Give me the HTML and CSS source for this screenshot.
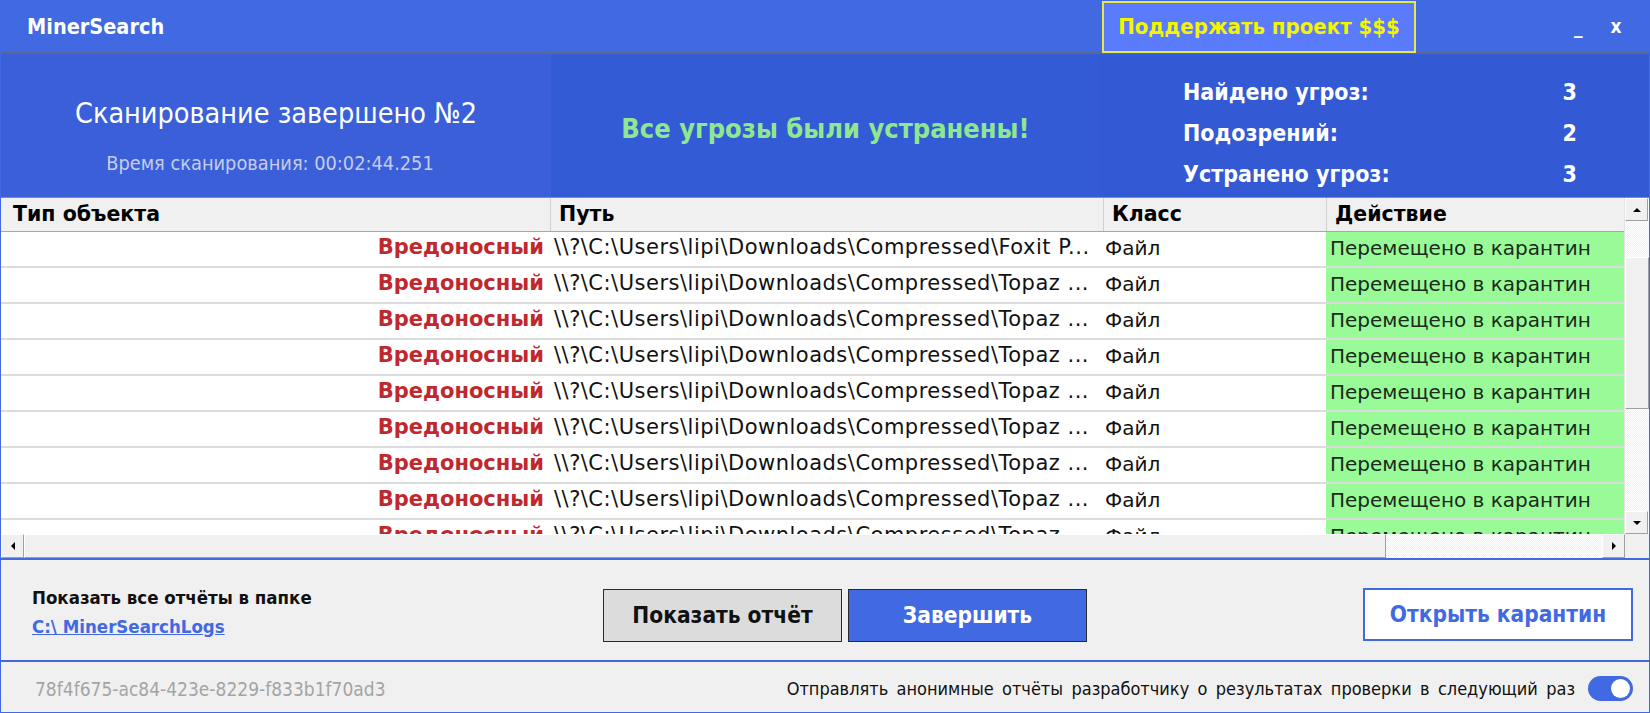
FILE: index.html
```html
<!DOCTYPE html>
<html lang="ru">
<head>
    <meta charset="UTF-8">
    <title>MinerSearch</title>
    <link rel="stylesheet" href="styles.css">
</head>
<body>
    <div class="window">
        <div class="titlebar">
            <div class="app-name">MinerSearch</div>
            <button class="donate-btn">Поддержать проект $$$</button>
            <div class="win-ctrls">
                <span class="win-btn">_</span>
                <span class="win-btn">x</span>
            </div>
        </div>

        <div class="summary">
            <div class="sum-left">
                <div class="scan-title">Сканирование завершено №2</div>
                <div class="scan-time">Время сканирования: 00:02:44.251</div>
            </div>
            <div class="sum-mid">
                <div class="scan-result">Все угрозы были устранены!</div>
            </div>
            <div class="sum-right">
                <div class="stat"><span>Найдено угроз:</span><span>3</span></div>
                <div class="stat"><span>Подозрений:</span><span>2</span></div>
                <div class="stat"><span>Устранено угроз:</span><span>3</span></div>
            </div>
        </div>

        <div class="grid-wrap">
            <div class="grid">
                <div class="grid-head">
                    <div class="hcell">Тип объекта</div>
                    <div class="hcell">Путь</div>
                    <div class="hcell">Класс</div>
                    <div class="hcell">Действие</div>
                </div>
                <div id="rows"></div>
            </div>
            <div class="vscroll">
                <div class="sb-btn"><span class="arr up"></span></div>
                <div class="vtrack">
                    <div class="vthumb"></div>
                </div>
                <div class="sb-btn"><span class="arr down"></span></div>
            </div>
        </div>
        <div class="hscroll">
            <div class="sb-btn"><span class="arr left"></span></div>
            <div class="htrack">
                <div class="hthumb"></div>
            </div>
            <div class="sb-btn"><span class="arr right"></span></div>
            <div class="corner"></div>
        </div>

        <div class="actions">
            <div class="logs">
                <div class="logs-label">Показать все отчёты в папке</div>
                <a class="logs-link" href="#">C:\ MinerSearchLogs</a>
            </div>
            <div class="main-btns">
                <button class="btn btn-grey">Показать отчёт</button>
                <button class="btn btn-blue">Завершить</button>
            </div>
            <button class="btn btn-outline">Открыть карантин</button>
        </div>

        <div class="footer">
            <div class="session-id">78f4f675-ac84-423e-8229-f833b1f70ad3</div>
            <label class="send-opt">
                Отправлять анонимные отчёты разработчику о результатах проверки в следующий раз
                <span class="toggle"><span class="knob"></span></span>
            </label>
        </div>
    </div>

    <script>
        // результаты проверки
        const items = [
            'Foxit P...', 'Topaz ...', 'Topaz ...', 'Topaz ...',
            'Topaz ...', 'Topaz ...', 'Topaz ...', 'Topaz ...', 'Topaz ...'
        ];

        const rows = document.getElementById('rows');
        items.forEach(name => {
            const row = document.createElement('div');
            row.className = 'grid-row';
            row.innerHTML =
                '<div class="cell type">Вредоносный</div>' +
                '<div class="cell path">\\\\?\\C:\\Users\\lipi\\Downloads\\Compressed\\' + name + '</div>' +
                '<div class="cell">Файл</div>' +
                '<div class="cell action">Перемещено в карантин</div>';
            rows.appendChild(row);
        });
    </script>
</body>
</html>
```

FILE: styles.css
```css
body {
    margin: 0;
    background: #f0f0f0;
    font-family: 'DejaVu Sans Condensed', 'DejaVu Sans', sans-serif;
    font-stretch: condensed;
}

.window {
    width: 1650px;
    height: 713px;
    box-sizing: border-box;
    border-left: 1px solid #4169e1;
    border-right: 1px solid #4169e1;
    border-bottom: 1px solid #4169e1;
    display: flex;
    flex-direction: column;
    overflow: hidden;
}

/* ---- заголовок окна ---- */
.titlebar {
    height: 52px;
    background: #4169e1;
    border-bottom: 2px solid #5d6892;
    display: flex;
    align-items: center;
    flex-shrink: 0;
}

.app-name {
    color: #fff;
    font-weight: bold;
    font-size: 21.5px;
    padding-left: 26px;
    flex: 1;
}

.donate-btn {
    height: 52px;
    width: 314px;
    margin-top: 1px;
    background: #5b7bfd;
    border: 2px solid #e8e84a;
    color: #f5f500;
    font-family: inherit;
    font-stretch: condensed;
    font-size: 22px;
    font-weight: bold;
    cursor: pointer;
}

.win-ctrls {
    width: 233px;
    box-sizing: border-box;
    display: flex;
    gap: 28px;
    padding-left: 158px;
    color: #fff;
    font-weight: bold;
    font-size: 19px;
}

/* ---- итог проверки ---- */
.summary {
    height: 143px;
    display: flex;
    background: #345bd6;
    border-bottom: 1px solid #8a8a9a;
    flex-shrink: 0;
    color: #fff;
}

.sum-left {
    width: 550px;
    background: #3a5fd9;
    display: flex;
    flex-direction: column;
    align-items: center;
    justify-content: center;
    gap: 22px;
    padding-top: 20px;
}

.scan-title {
    font-size: 28.5px;
}

.scan-time {
    font-size: 19.8px;
    color: #c5cde8;
    margin-right: 12px;
}

.sum-mid {
    width: 549px;
    display: flex;
    align-items: center;
    justify-content: center;
    padding-top: 6px;
}

.scan-result {
    color: #8fe88f;
    font-size: 27px;
    font-weight: bold;
}

.sum-right {
    flex: 1;
    background: #3359d4;
    padding: 25px 72px 0 83px;
    display: flex;
    flex-direction: column;
    gap: 15px;
}

.stat {
    display: flex;
    justify-content: space-between;
    font-size: 23px;
    font-weight: bold;
}

/* ---- таблица ---- */
.grid-wrap {
    height: 336px;
    display: flex;
    background: #fff;
    flex-shrink: 0;
    font-family: 'DejaVu Sans', sans-serif;
    font-stretch: normal;
}

.grid {
    flex: 1;
    overflow: hidden;
}

.grid-head,
.grid-row {
    display: grid;
    grid-template-columns: 549px 553px 223px 300px;
}

.grid-head {
    height: 33px;
    background: #f0f0f0;
    border-bottom: 1px solid #a8a8a8;
}

.hcell {
    font-weight: bold;
    font-size: 20.5px;
    padding: 4px 0 0 8px;
    border-left: 1px solid #d0d0d0;
}

.hcell:first-child {
    border-left: none;
    padding-left: 12px;
}

.grid-row {
    height: 34px;
    border-bottom: 2px solid #dcdcdc;
    font-size: 20px;
}

.cell {
    padding: 4px 0 0 2px;
    white-space: nowrap;
    overflow: hidden;
    color: #111;
}

.cell.type {
    text-align: right;
    padding-right: 6px;
    font-size: 21px;
    padding-top: 3px;
    color: #c0282d;
    font-weight: bold;
}

.cell.path {
    padding-left: 4px;
    padding-top: 3px;
    font-size: 21px;
    letter-spacing: 0.5px;
}

.cell.action {
    padding-left: 4px;
    background: #98fb98;
    color: #1c2a1c;
}

/* ---- полосы прокрутки ---- */
.vscroll {
    width: 24px;
    display: flex;
    flex-direction: column;
    border-left: 1px solid #e4e4e4;
}

.sb-btn {
    width: 23px;
    height: 23px;
    background: #f0f0f0;
    border: 1px solid #fff;
    border-right-color: #a0a0a0;
    border-bottom-color: #a0a0a0;
    box-sizing: border-box;
    display: flex;
    align-items: center;
    justify-content: center;
    flex-shrink: 0;
}

.vtrack,
.htrack {
    flex: 1;
    background: repeating-conic-gradient(#f0f0f0 0 25%, #fff 0 50%) 0 0 / 2px 2px;
}

.vthumb {
    height: 150px;
    margin-top: 36px;
    background: #f0f0f0;
    border: 1px solid #fff;
    border-right-color: #a0a0a0;
    border-bottom-color: #a0a0a0;
}

.hscroll {
    height: 24px;
    display: flex;
    background: #f0f0f0;
    flex-shrink: 0;
}

.hthumb {
    width: 1362px;
    height: 100%;
    box-sizing: border-box;
    background: #f0f0f0;
    border: 1px solid #fff;
    border-right-color: #a0a0a0;
    border-bottom-color: #a0a0a0;
}

.hscroll .sb-btn {
    height: 24px;
}

.corner {
    width: 24px;
    background: #f0f0f0;
}

.arr {
    width: 0;
    height: 0;
    border: 4px solid transparent;
}

.arr.up    { border-bottom-color: #000; margin-top: -4px; }
.arr.down  { border-top-color: #000; margin-bottom: -4px; }
.arr.left  { border-right-color: #000; margin-left: -4px; }
.arr.right { border-left-color: #000; margin-right: -4px; }

/* ---- кнопки ---- */
.actions {
    height: 100px;
    border-top: 2px solid #4169e1;
    border-bottom: 2px solid #4169e1;
    display: flex;
    align-items: center;
    flex-shrink: 0;
}

.logs {
    width: 571px;
    padding-left: 31px;
    display: flex;
    flex-direction: column;
    gap: 8px;
    margin-top: 4px;
}

.logs-label {
    font-weight: bold;
    font-size: 18.5px;
    color: #111;
}

.logs-link {
    font-weight: bold;
    font-size: 18.5px;
    color: #4169e1;
}

.main-btns {
    display: flex;
    gap: 6px;
    margin-top: 10px;
}

.btn {
    height: 53px;
    width: 239px;
    font-family: inherit;
    font-stretch: condensed;
    font-size: 22.5px;
    font-weight: bold;
    cursor: pointer;
}

.btn-grey {
    background: #dcdcdc;
    border: 1px solid #2a2a2a;
    color: #111;
}

.btn-blue {
    background: #4169e1;
    border: 1px solid #2a2a2a;
    color: #fff;
}

.btn-outline {
    margin-left: auto;
    margin-right: 16px;
    margin-top: 8px;
    width: 270px;
    background: #fff;
    border: 2px solid #4169e1;
    color: #4169e1;
}

/* ---- нижняя строка ---- */
.footer {
    flex: 1;
    display: flex;
    align-items: center;
    justify-content: space-between;
    padding: 3px 16px 0 34px;
}

.session-id {
    color: #a4a4a4;
    font-size: 19px;
}

.send-opt {
    display: flex;
    align-items: center;
    gap: 13px;
    font-size: 18px;
    word-spacing: 3.2px;
    color: #111;
}

.toggle {
    width: 45px;
    height: 25px;
    border-radius: 13px;
    background: #4169e1;
    display: flex;
    align-items: center;
    justify-content: flex-end;
    padding-right: 3px;
    box-sizing: border-box;
}

.knob {
    width: 19px;
    height: 19px;
    border-radius: 50%;
    background: #fff;
}
```
